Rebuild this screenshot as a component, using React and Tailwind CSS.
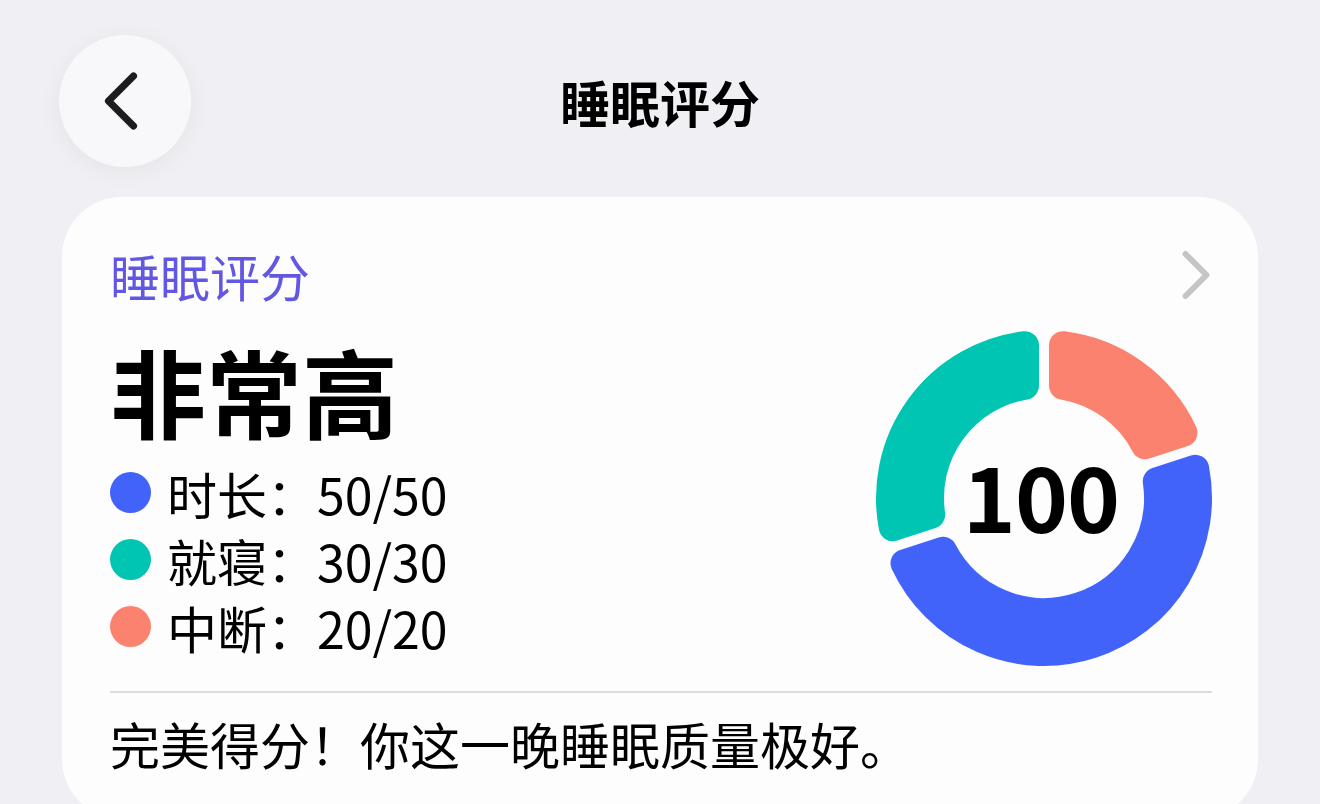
import React from "react";
import { ChevronLeft, ChevronRight } from "lucide-react";

const FONT = { fontFamily: '"Noto Sans CJK SC", "Noto Sans", sans-serif' };

const parts = [
  { label: "时长", score: 50, max: 50, color: "#4263fa" },
  { label: "就寝", score: 30, max: 30, color: "#00c5b2" },
  { label: "中断", score: 20, max: 20, color: "#fb826e" },
];

// ring geometry (svg units = px)
const SIZE = 340;
const C = SIZE / 2;
const R_OUT = 168;
const R_IN = 100;
const GAP = 10;
const CORNER = 14;

const point = (r, deg) => {
  const rad = ((deg - 90) * Math.PI) / 180;
  return [C + r * Math.cos(rad), C + r * Math.sin(rad)];
};

// annular sector shrunk by the corner radius; a round-joined stroke of
// the same colour grows it back and softens the corners
const sectorPath = (start, end) => {
  const ro = R_OUT - CORNER;
  const ri = R_IN + CORNER;
  const d = GAP / 2 + CORNER;
  const off = (r) => (Math.asin(d / r) * 180) / Math.PI;
  const large = end - start - 2 * off(ro) > 180 ? 1 : 0;
  const [x1, y1] = point(ro, start + off(ro));
  const [x2, y2] = point(ro, end - off(ro));
  const [x3, y3] = point(ri, end - off(ri));
  const [x4, y4] = point(ri, start + off(ri));
  return `M${x1} ${y1} A${ro} ${ro} 0 ${large} 1 ${x2} ${y2} L${x3} ${y3} A${ri} ${ri} 0 ${large} 0 ${x4} ${y4} Z`;
};

const ScoreRing = ({ total }) => {
  // clockwise from 12 o'clock: 中断, 时长, 就寝
  const order = [parts[2], parts[0], parts[1]];
  let angle = 0;
  const segments = order.map((p) => {
    const sweep = (p.max / 100) * 360;
    const seg = { color: p.color, start: angle, end: angle + sweep };
    angle += sweep;
    return seg;
  });

  return (
    <div className="relative w-[340px] h-[340px] shrink-0 -mt-[4px] -mr-[2px]">
      <svg width={SIZE} height={SIZE} viewBox={`0 0 ${SIZE} ${SIZE}`}>
        {segments.map((s) => (
          <path
            key={s.color}
            d={sectorPath(s.start, s.end)}
            fill={s.color}
            stroke={s.color}
            strokeWidth={CORNER * 2}
            strokeLinejoin="round"
          />
        ))}
      </svg>
      <div className="absolute inset-0 flex items-center justify-center pr-[6px] pb-[8px]">
        <span className="text-[90px] font-bold leading-none text-black tracking-[-1px]">
          {total}
        </span>
      </div>
    </div>
  );
};

export default function App() {
  const total = parts.reduce((sum, p) => sum + p.score, 0);

  return (
    <div
      style={FONT}
      className="w-[1320px] h-[804px] overflow-hidden bg-[#f0f0f4] text-black"
    >
      {/* nav bar */}
      <div className="relative h-[197px]">
        <button className="absolute left-[59px] top-[35px] w-[132px] h-[132px] rounded-full bg-[#f8f8fa] shadow-[0_4px_24px_rgba(0,0,0,0.05)] flex items-center justify-center">
          <ChevronLeft className="w-[100px] h-[100px] text-[#1c1c1e] -ml-[8px]" strokeWidth={1.7} />
        </button>
        <div className="pt-[71px] text-center text-[50px] leading-[60px] font-semibold">
          睡眠评分
        </div>
      </div>

      {/* score card */}
      <div className="mx-[62px] h-[622px] rounded-[60px] bg-[#fdfdfd] pt-[48px] pl-[48px] pr-[46px]">
        <div className="flex items-center justify-between h-[60px]">
          <span className="text-[50px] leading-[60px] text-[#6257e3]">睡眠评分</span>
          <ChevronRight className="w-[84px] h-[84px] text-[#c5c5c8] -mr-[26px]" strokeWidth={1.7} />
        </div>

        <div className="flex justify-between mt-[27px]">
          <div>
            <div className="text-[96px] leading-[115px] font-bold">非常高</div>
            <div className="mt-[12px]">
              {parts.map((p) => (
                <div key={p.label} className="flex items-center h-[67px]">
                  <span
                    className="w-[41px] h-[41px] rounded-full mr-[16px]"
                    style={{ backgroundColor: p.color }}
                  />
                  <span className="text-[50px] leading-none">
                    {p.label}：{p.score}/{p.max}
                  </span>
                </div>
              ))}
            </div>
          </div>
          <ScoreRing total={total} />
        </div>

        <div className="mt-[23px] border-t-2 border-[#dcdcde]" />
        <div className="pt-[20px] text-[50px] leading-[60px]">
          完美得分！你这一晚睡眠质量极好。
        </div>
      </div>
    </div>
  );
}
